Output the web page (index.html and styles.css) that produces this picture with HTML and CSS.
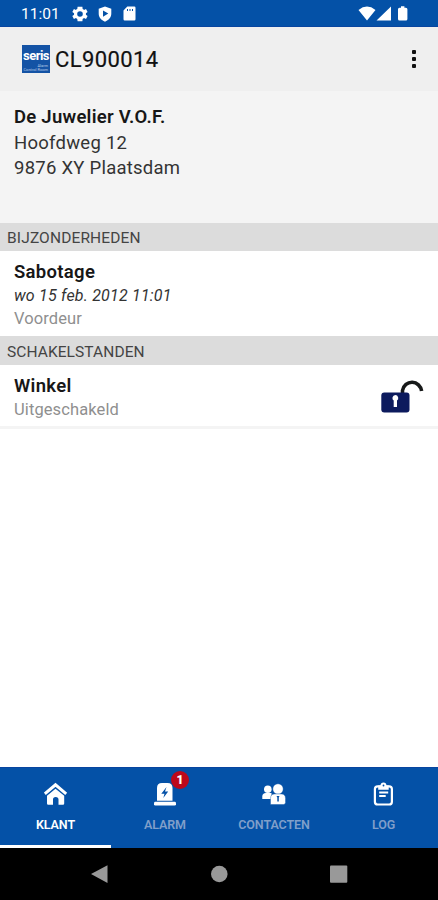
FILE: index.html
```
<!DOCTYPE html>
<html lang="nl">
<head>
<meta charset="utf-8">
<title>CL900014</title>
<link rel="stylesheet" href="styles.css">
</head>
<body>
<div class="status">
  <span class="clock">11:01</span>
  <svg class="gear" width="16" height="16" viewBox="2 2 20 20"><path fill="#fff" fill-rule="evenodd" d="M19.400 13a7.500 7.500 0 0 0 0-2l2.100-1.600-2-3.500-2.500 1a7.700 7.700 0 0 0-1.700-1L15 3H9l-.4 2.900a7.700 7.700 0 0 0-1.700 1l-2.500-1-2 3.500L4.600 11a7.500 7.500 0 0 0 0 2l-2.200 1.600 2 3.500 2.500-1a7.700 7.700 0 0 0 1.700 1L9 21h6l.3-2.900a7.700 7.700 0 0 0 1.700-1l2.500 1 2-3.500zM12 15.500a3.500 3.500 0 1 1 0-7 3.500 3.500 0 0 1 0 7z"/></svg>
  <svg class="shield" width="14" height="16" viewBox="0 0 14 16"><path fill="#fff" fill-rule="evenodd" d="M7 .4 13.300 2.700V7.500c0 3.800-2.600 6.800-6.300 8.200C3.300 14.300.7 11.300.7 7.500V2.700zM5 4.500v6.300L10.300 7.600z"/></svg>
  <svg class="card" width="13" height="15" viewBox="0 0 13 15"><path fill="#fff" fill-rule="evenodd" d="M4.300.5H11.300Q12.500.5 12.500 1.700V13.300Q12.500 14.500 11.300 14.500H1.700Q.5 14.500.5 13.300V4.500zM4 3V5H5V3zM6.500 3V5H7.500V3zM9 3V5H10V3z"/></svg>
  <svg class="signals" width="52" height="16" viewBox="0 0 52 16"><path fill="#fff" d="M.5 4Q9 -2.800 17.500 4L9 14.500zM18.500 14.500 33 .5V14.500zM41.500 1.800H43V.3H46.400V1.800H47.900Q49.400 1.800 49.400 3.300V13Q49.400 14.500 47.900 14.500H41.500Q40 14.500 40 13V3.300Q40 1.800 41.500 1.800z"/></svg>
</div>
<header class="appbar">
  <div class="logo"><span class="brand">seris</span><span class="sub">Alarm</span><span class="sub">Control Room</span></div>
  <h1>CL900014</h1>
  <div class="more"><i></i><i></i><i></i></div>
</header>
<section class="customer">
  <strong>De Juwelier V.O.F.</strong>
  <span>Hoofdweg 12</span>
  <span>9876 XY Plaatsdam</span>
</section>
<h2 class="first">BIJZONDERHEDEN</h2>
<section class="item incident">
  <div><strong>Sabotage</strong><em>wo 15 feb. 2012 11:01</em><small>Voordeur</small></div>
</section>
<h2 class="second">SCHAKELSTANDEN</h2>
<section class="item state">
  <div><strong>Winkel</strong><small>Uitgeschakeld</small></div>
  <svg width="44" height="36" viewBox="0 0 44 36"><path fill="none" stroke="#171919" stroke-width="3.600" d="M22.500 15.500V12.500A9.700 10.300 0 0 1 41.600 13"/><rect x="1.300" y="14.500" width="28.200" height="20" rx="3" fill="#0c1a5d"/><path fill="#fff" d="M15.300 17a3.100 3.100 0 0 1 1.700 5.600V29H13.700V22.600A3.100 3.100 0 0 1 15.300 17z"/></svg>
</section>
<main></main>
<nav class="tabs">
  <a class="active">
    <svg width="24" height="24" viewBox="0 0 24 24"><path fill="none" stroke="#fff" stroke-width="3" d="M.8 11.800 11.500 2.800 22.200 11.800"/><path fill="#fff" d="M11.500 6.700 20.200 13.800V21.500Q20.200 22.800 19 22.800H14.500V17.500Q14.500 15 11.700 15T9 17.500V22.800H4.200Q3 22.800 3 21.500V13.800z"/></svg>
    <span>KLANT</span>
  </a>
  <a>
    <svg width="24" height="24" viewBox="0 0 24 24"><path fill="#fff" fill-rule="evenodd" d="M4 18.800V6Q4 1 9 1H14.500Q19.500 1 19.500 6V18.800zM13.500 5 8.300 11.700H11.500L10.300 16 15.200 9.500H12z"/><rect x="1" y="19.800" width="22" height="3.800" rx="1.400" fill="#fff"/></svg>
    <b class="badge">1</b>
    <span>ALARM</span>
  </a>
  <a>
    <svg width="24" height="24" viewBox="0 0 24 24"><g fill="#fff"><circle cx="5.800" cy="7.200" r="3.800"/><path d="M.3 17V14.500Q.3 11 4 11H9.500V17z"/></g><g fill="#fff" stroke="#0451a7" stroke-width=".4"><circle cx="16" cy="7" r="5.200"/><path d="M8.500 22.500V16.500Q8.500 12 12.500 12H19.500Q23.500 12 23.500 16.500V20.500Q23.500 22.500 21.500 22.500z"/></g><path fill="#0451a7" d="M14.500 14H17.500L16.800 15.500V19.500H15.300V15.500z"/></svg>
    <span>CONTACTEN</span>
  </a>
  <a>
    <svg width="24" height="24" viewBox="0 0 24 24"><g transform="translate(-.8)"><rect x="3.700" y="4.300" width="17" height="18.200" rx="2.800" fill="none" stroke="#fff" stroke-width="2.200"/><path fill="#fff" d="M7 3.500H9.200Q9.500 .5 12.300 .5T15.300 3.500H17.500V7.700H7zM8 9.500H17V11.500H8zM8 13H14.500V15H8z"/><circle cx="12.300" cy="3.500" r=".9" fill="#0451a7"/></g></svg>
    <span>LOG</span>
  </a>
</nav>
<footer class="system">
  <svg width="438" height="52" viewBox="0 0 438 52"><g fill="#999"><path d="M91 26 107.500 17.200V35z"/><circle cx="219.300" cy="26" r="8.300"/><rect x="330" y="17.500" width="17.300" height="17.300" rx="1"/></g></svg>
</footer>
</body>
</html>
```
FILE: styles.css
```
* { box-sizing: border-box; }
body { margin: 0; width: 438px; height: 900px; display: flex; flex-direction: column; background: #fff; font-family: Roboto, sans-serif; color: #171717; overflow: hidden; }
svg { display: block; flex: none; }
h1, h2 { margin: 0; font-weight: 400; }
.status { height: 27px; flex: none; background: #0451a7; display: flex; align-items: center; padding: 1px 28px 0 21px; border-bottom: 1px solid #0845a0; }
.clock { width: 51px; color: #fff; font-size: 15.500px; white-space: nowrap; }
.shield { margin-left: 10px; }
.card { margin-left: 11px; }
.signals { margin-left: auto; }
.appbar { height: 64px; flex: none; background: #efefef; display: flex; align-items: center; padding: 0 22px; }
.logo { width: 28px; height: 28px; background: #1453a5; color: #fff; display: flex; flex-direction: column; overflow: hidden; }
.brand { font: 700 13px/16px Roboto, sans-serif; height: 19px; padding-top: 3px; letter-spacing: -.5px; text-align: center; }
.sub { font-size: 4px; line-height: 4px; text-align: right; padding-right: 2px; white-space: nowrap; color: #b8cce6; }
h1 { font-size: 22px; line-height: 26px; margin-left: 5px; padding-top: 1px; letter-spacing: .4px; color: #111; -webkit-text-stroke: .2px #111; }
.more { margin-left: auto; display: flex; flex-direction: column; gap: 3px; padding-right: .5px; }
.more i { width: 4px; height: 4px; border-radius: 1px; background: #111; }
.customer { height: 132px; flex: none; background: #f4f4f4; padding: 14px 14px 0; display: flex; flex-direction: column; align-items: flex-start; font-size: 18.500px; letter-spacing: .25px; line-height: 25.500px; color: #333; }
.customer strong { font-weight: 600; color: #171717; }
h2 { height: 29px; flex: none; background: #dcdcdc; padding-left: 7px; font-size: 15.500px; letter-spacing: .15px; line-height: 30px; color: #444; }
.first { height: 28px; }
.second { line-height: 32px; letter-spacing: .08px; }
.item { flex: none; padding: 0 14px; display: flex; justify-content: space-between; }
.item > div { display: flex; flex-direction: column; align-items: flex-start; }
.item strong { font-size: 18.500px; letter-spacing: .3px; line-height: 24px; font-weight: 600; }
.item em { font-size: 16px; letter-spacing: .2px; line-height: 22px; color: #333; margin-top: 1px; }
.item small { font-size: 16.500px; letter-spacing: .1px; line-height: 23px; color: #8f8f8f; }
.incident { height: 85px; padding-top: 9px; }
.state { height: 64px; padding-top: 9px; border-bottom: 3px solid #f4f4f4; }
.state svg { margin-top: 4px; }
main { flex: 1; }
.tabs { height: 81px; flex: none; display: grid; grid-template-columns: 111px 108px 110px 109px; background: #0451a7; border-top: 1px solid #0845a0; }
.tabs a { position: relative; display: flex; flex-direction: column; align-items: center; padding-top: 14px; color: #809fca; font-size: 12.500px; letter-spacing: -.1px; font-weight: 600; line-height: 16px; }
.tabs span { margin-top: 11px; }
.tabs .active { color: #fff; border-bottom: 3px solid #fff; }
.badge { position: absolute; left: 60px; top: 3px; width: 18px; height: 18px; border-radius: 50%; background: #bd081c; color: #fff; font-size: 12px; line-height: 18px; text-align: center; }
.system { height: 52px; flex: none; background: #000; }
```
